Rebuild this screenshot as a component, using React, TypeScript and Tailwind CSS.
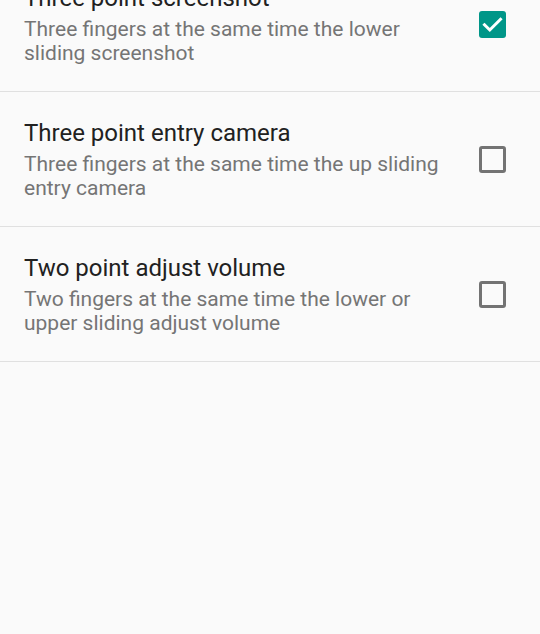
import { useState } from 'react';

interface Setting {
  id: string;
  title: string;
  summary: string;
  checked: boolean;
}

const initialSettings: Setting[] = [
  {
    id: 'screenshot',
    title: 'Three point screenshot',
    summary: 'Three fingers at the same time the lower sliding screenshot',
    checked: true,
  },
  {
    id: 'camera',
    title: 'Three point entry camera',
    summary: 'Three fingers at the same time the up sliding entry camera',
    checked: false,
  },
  {
    id: 'volume',
    title: 'Two point adjust volume',
    summary: 'Two fingers at the same time the lower or upper sliding adjust volume',
    checked: false,
  },
];

function CheckBox({ checked }: { checked: boolean }) {
  if (checked) {
    return (
      <div className="flex h-[27px] w-[27px] shrink-0 items-center justify-center rounded-[3px] bg-[#009688]">
        <svg viewBox="0 0 27 27" className="h-[27px] w-[27px]">
          <path
            d="M5.5 13.8 L10.8 19 L21.5 8.3"
            fill="none"
            stroke="#ffffff"
            strokeWidth="3"
            strokeLinecap="square"
          />
        </svg>
      </div>
    );
  }
  return <div className="h-[27px] w-[27px] shrink-0 rounded-[3px] border-[3px] border-[#737373]" />;
}

export default function App() {
  const [settings, setSettings] = useState(initialSettings);

  const toggle = (id: string) => {
    setSettings((prev) => prev.map((s) => (s.id === id ? { ...s, checked: !s.checked } : s)));
  };

  return (
    <div
      className="h-[634px] w-full overflow-hidden bg-[#fafafa]"
      style={{ fontFamily: 'Roboto, "Noto Sans", sans-serif' }}
    >
      <div className="-mt-[43px]">
        {settings.map((s) => (
          <div
            key={s.id}
            className="flex cursor-pointer items-center border-b border-[#e0e0e0] pl-6 pr-[34px]"
            onClick={() => toggle(s.id)}
          >
            <div className="flex-1 pt-[27px] pb-[26px] pr-8">
              <div className="text-[24px] leading-[28px] text-[#212121]">{s.title}</div>
              <div className="mt-[6px] text-[21px] leading-[23.5px] text-[#757575]">{s.summary}</div>
            </div>
            <CheckBox checked={s.checked} />
          </div>
        ))}
      </div>
    </div>
  );
}
